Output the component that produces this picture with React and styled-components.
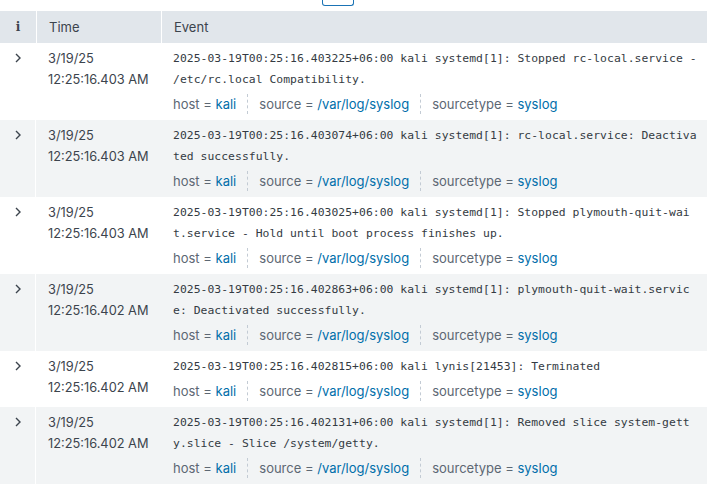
import React from "react";
import styled, { createGlobalStyle } from "styled-components";

const GlobalStyle = createGlobalStyle`
  body {
    margin: 0;
    background: #ffffff;
    font-family: Inter, "Noto Sans", sans-serif;
    color: #3c444d;
  }
`;

const events = [
  {
    date: "3/19/25",
    time: "12:25:16.403 AM",
    lines: [
      "2025-03-19T00:25:16.403225+06:00 kali systemd[1]: Stopped rc-local.service -",
      "/etc/rc.local Compatibility.",
    ],
  },
  {
    date: "3/19/25",
    time: "12:25:16.403 AM",
    lines: [
      "2025-03-19T00:25:16.403074+06:00 kali systemd[1]: rc-local.service: Deactiva",
      "ted successfully.",
    ],
  },
  {
    date: "3/19/25",
    time: "12:25:16.403 AM",
    lines: [
      "2025-03-19T00:25:16.403025+06:00 kali systemd[1]: Stopped plymouth-quit-wai",
      "t.service - Hold until boot process finishes up.",
    ],
  },
  {
    date: "3/19/25",
    time: "12:25:16.402 AM",
    lines: [
      "2025-03-19T00:25:16.402863+06:00 kali systemd[1]: plymouth-quit-wait.servic",
      "e: Deactivated successfully.",
    ],
  },
  {
    date: "3/19/25",
    time: "12:25:16.402 AM",
    lines: ["2025-03-19T00:25:16.402815+06:00 kali lynis[21453]: Terminated"],
  },
  {
    date: "3/19/25",
    time: "12:25:16.402 AM",
    lines: [
      "2025-03-19T00:25:16.402131+06:00 kali systemd[1]: Removed slice system-gett",
      "y.slice - Slice /system/getty.",
    ],
  },
];

const fields = [
  { key: "host", value: "kali" },
  { key: "source", value: "/var/log/syslog" },
  { key: "sourcetype", value: "syslog" },
];

const TopStrip = styled.div`
  height: 11px;
  display: flex;
  padding-left: 322px;
`;

const TabButton = styled.div`
  width: 30px;
  height: 5px;
  border: 1px solid #1a73b5;
  border-top: none;
  border-radius: 0 0 3px 3px;
`;

const Table = styled.div`
  display: grid;
  grid-template-columns: 36px 125px 1fr;
  width: 707px;
`;

const HeadCell = styled.div`
  height: 32px;
  background: #e1e6eb;
  display: flex;
  align-items: center;
  padding-left: ${(p) => (p.$center ? "0" : "12px")};
  justify-content: ${(p) => (p.$center ? "center" : "flex-start")};
  border-left: ${(p) => (p.$first ? "none" : "1px solid #ffffff")};
  font-size: 13px;
  color: #3c444d;
`;

const InfoGlyph = styled.span`
  font-family: "DejaVu Serif", serif;
  font-weight: bold;
  font-size: 12px;
  color: #3c444d;
`;

const Row = styled.div`
  display: contents;
  & > div {
    background: ${(p) => (p.$odd ? "#f2f4f5" : "#ffffff")};
  }
`;

const ExpandCell = styled.div`
  display: flex;
  justify-content: center;
  padding-top: 10px;
  border-right: 1px solid #ffffff;
`;

const TimeCell = styled.div`
  padding: 5px 0 0 12px;
  font-size: 12.8px;
  line-height: 21px;
  color: #3c444d;
`;

const EventCell = styled.div`
  padding: 5px 0 6px 12px;
`;

const RawText = styled.div`
  font-family: "DejaVu Sans Mono", "Liberation Mono", monospace;
  font-size: 11.36px;
  letter-spacing: 0.05px;
  line-height: 21px;
  color: #343b43;
  white-space: pre;
`;

const FieldRow = styled.div`
  display: flex;
  align-items: center;
  margin-top: 4px;
  height: 20px;
  font-size: 13px;
`;

const Field = styled.span`
  color: #5c6773;
  white-space: pre;
`;

const FieldValue = styled.span`
  color: #006eaa;
`;

const Divider = styled.span`
  width: 0;
  height: 20px;
  border-left: 1px dashed #c3cbd4;
  margin: 0 11px;
`;

function Chevron() {
  return (
    <svg width="8" height="10" viewBox="0 0 8 10">
      <polyline
        points="2,1 6,5 2,9"
        fill="none"
        stroke="#3c444d"
        strokeWidth="1.4"
      />
    </svg>
  );
}

export default function App() {
  return (
    <>
      <GlobalStyle />
      <TopStrip>
        <TabButton />
      </TopStrip>
      <Table>
        <HeadCell $first $center>
          <InfoGlyph>i</InfoGlyph>
        </HeadCell>
        <HeadCell>Time</HeadCell>
        <HeadCell>Event</HeadCell>
        {events.map((ev, i) => (
          <Row key={i} $odd={i % 2 === 1}>
            <ExpandCell>
              <Chevron />
            </ExpandCell>
            <TimeCell>
              {ev.date}
              <br />
              {ev.time}
            </TimeCell>
            <EventCell>
              <RawText>{ev.lines.join("\n")}</RawText>
              <FieldRow>
                {fields.map((f, j) => (
                  <React.Fragment key={f.key}>
                    {j > 0 && <Divider />}
                    <Field>
                      {f.key} = <FieldValue>{f.value}</FieldValue>
                    </Field>
                  </React.Fragment>
                ))}
              </FieldRow>
            </EventCell>
          </Row>
        ))}
      </Table>
    </>
  );
}
